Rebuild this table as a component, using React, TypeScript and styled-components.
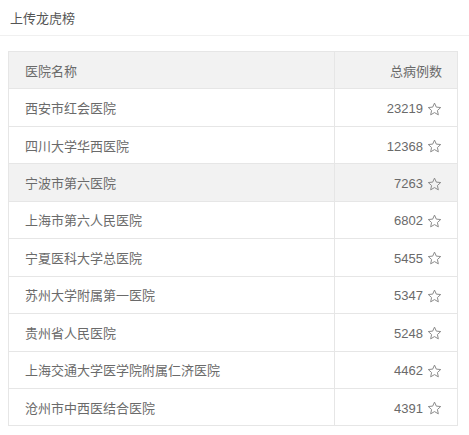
import React from "react";
import styled, { createGlobalStyle } from "styled-components";

const Global = createGlobalStyle`
  html, body { margin: 0; padding: 0; background: #fff; }
  body { font-family: "Microsoft YaHei", "Noto Sans CJK SC", "Liberation Sans", sans-serif; }
`;

const Page = styled.div`
  width: 469px;
  height: 435px;
  background: #fff;
  overflow: hidden;
`;

const Title = styled.div`
  height: 36px;
  box-sizing: border-box;
  padding-left: 10px;
  display: flex;
  align-items: center;
  font-size: 13px;
  color: #555;
  border-bottom: 1px solid #f0f0f0;
`;

const Body = styled.div`
  padding: 15px 12px 0 8px;
`;

const Table = styled.table`
  width: 449px;
  border-collapse: collapse;
  table-layout: fixed;
  font-size: 13px;
  color: #6a6a6a;
`;

const Row = styled.tr<{ $shade?: boolean }>`
  height: 37.45px;
  background: ${(p) => (p.$shade ? "#f2f2f2" : "#fff")};
`;

const Cell = styled.td<{ $right?: boolean }>`
  border: 1px solid #e6e6e6;
  padding: 0 ${(p) => (p.$right ? "15px" : "16px")};
  text-align: ${(p) => (p.$right ? "right" : "left")};
  vertical-align: middle;
  white-space: nowrap;
`;

const HeadCell = styled(Cell).attrs({ as: "th" })`
  font-weight: normal;
`;

const Count = styled.span`
  display: inline-flex;
  align-items: center;
  gap: 4px;
  font-family: "Liberation Sans", Arial, sans-serif;
`;

const Star = () => (
  <svg width="15" height="14" viewBox="0 0 24 23" fill="none" stroke="#888" strokeWidth="1.6" strokeLinejoin="round">
    <path d="M12 1.8 L15 8.4 L22.2 9.1 L16.8 14 L18.3 21.1 L12 17.4 L5.7 21.1 L7.2 14 L1.8 9.1 L9 8.4 Z" />
  </svg>
);

const data: [string, number][] = [
  ["西安市红会医院", 23219],
  ["四川大学华西医院", 12368],
  ["宁波市第六医院", 7263],
  ["上海市第六人民医院", 6802],
  ["宁夏医科大学总医院", 5455],
  ["苏州大学附属第一医院", 5347],
  ["贵州省人民医院", 5248],
  ["上海交通大学医学院附属仁济医院", 4462],
  ["沧州市中西医结合医院", 4391],
];

export default function App() {
  return (
    <Page>
      <Global />
      <Title>上传龙虎榜</Title>
      <Body>
        <Table>
          <colgroup>
            <col style={{ width: 326 }} />
            <col style={{ width: 123 }} />
          </colgroup>
          <thead>
            <Row $shade>
              <HeadCell>医院名称</HeadCell>
              <HeadCell $right>总病例数</HeadCell>
            </Row>
          </thead>
          <tbody>
            {data.map(([name, n], i) => (
              <Row key={name} $shade={i === 2}>
                <Cell>{name}</Cell>
                <Cell $right>
                  <Count>
                    {n}
                    <Star />
                  </Count>
                </Cell>
              </Row>
            ))}
          </tbody>
        </Table>
      </Body>
    </Page>
  );
}
